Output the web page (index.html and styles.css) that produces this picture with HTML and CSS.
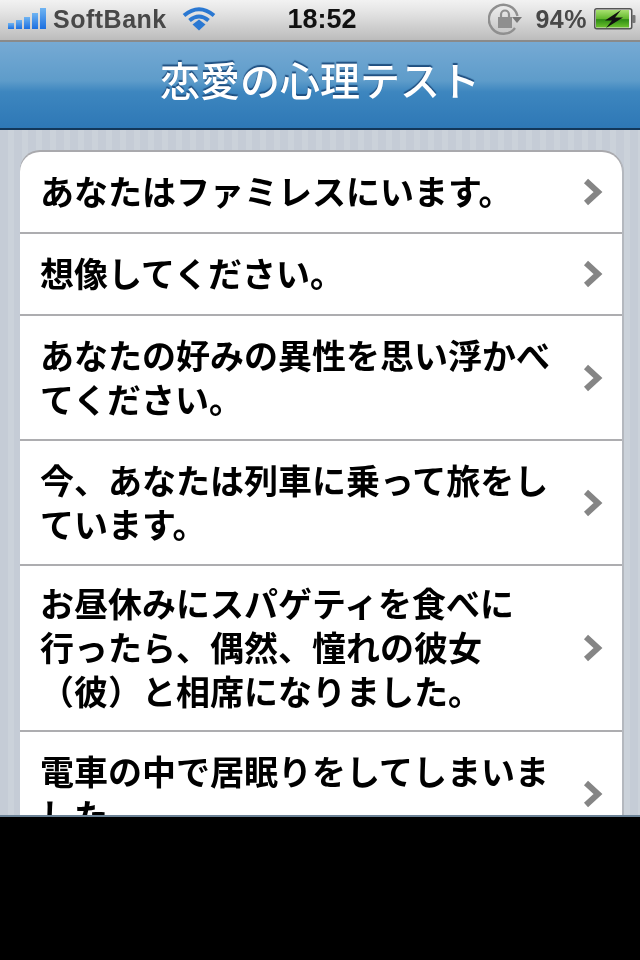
FILE: index.html
```html
<!DOCTYPE html>
<html lang="ja">
<head>
<meta charset="utf-8">
<title>恋愛の心理テスト</title>
<link rel="stylesheet" href="styles.css">
</head>
<body>
<main class="screen">
  <header class="status">
    <div class="status-left">
      <svg class="signal" width="40" height="22" viewBox="0 0 40 22">
        <defs><linearGradient id="sig" x1="0" y1="0" x2="0" y2="1"><stop offset="0" stop-color="#6fb4f2"/><stop offset="1" stop-color="#1c6fe0"/></linearGradient></defs>
        <rect x="0" y="15" width="6" height="6" fill="url(#sig)"/>
        <rect x="8" y="12" width="6" height="9" fill="url(#sig)"/>
        <rect x="16" y="9" width="6" height="12" fill="url(#sig)"/>
        <rect x="24" y="5" width="6" height="16" fill="url(#sig)"/>
        <rect x="32" y="0" width="6" height="21" fill="url(#sig)"/>
      </svg>
      <span class="carrier">SoftBank</span>
      <svg class="wifi" width="34" height="26" viewBox="0 0 34 26">
        <path d="M2 9.500Q17 -3 32 9.500" fill="none" stroke="#2a78d2" stroke-width="4"/>
        <path d="M7.500 14.500Q17 6.500 26.500 14.500" fill="none" stroke="#2a78d2" stroke-width="4"/>
        <path d="M10.500 18.500L17 13.500L23.500 18.500L17 24.500Z" fill="#2a78d2"/>
      </svg>
    </div>
    <time class="clock">18:52</time>
    <div class="status-right">
      <svg class="lock" width="34" height="33" viewBox="0 0 34 33">
        <path d="M27 25A14.500 14.500 0 1 1 29.500 13" fill="none" stroke="#8f8f8f" stroke-width="2.400"/>
        <path d="M24 14H34L29 20Z" fill="#777"/>
        <rect x="10" y="14" width="14" height="11" fill="#8f8f8f"/>
        <path d="M13 14V11.500A4 4 0 0 1 21 11.500V14" fill="none" stroke="#8f8f8f" stroke-width="2.200"/>
      </svg>
      <span class="percent">94%</span>
      <svg class="battery" width="42" height="22" viewBox="0 0 42 22">
        <defs><linearGradient id="bat" x1="0" y1="0" x2="0" y2="1"><stop offset="0" stop-color="#a8e070"/><stop offset="0.5" stop-color="#62b82c"/><stop offset="0.55" stop-color="#2f8c14"/><stop offset="1" stop-color="#6cc22e"/></linearGradient></defs>
        <rect x="0.750" y="0.750" width="37" height="20" rx="2" fill="#e8e8e8" stroke="#555" stroke-width="1.500"/>
        <rect x="2" y="2" width="33" height="17.500" fill="url(#bat)"/>
        <rect x="38" y="7" width="3.500" height="8" rx="1" fill="#777"/>
        <path d="M27 2L11 12.500H18L12 20L29 9.500H21Z" fill="#111"/>
      </svg>
    </div>
  </header>
  <h1 class="navbar">恋愛の心理テスト</h1>
  <section class="content">
    <ul class="list">
      <li class="row one"><span class="label">あなたはファミレスにいます。</span><svg class="chevron" width="20" height="28" viewBox="0 0 20 28"><path d="M3 3L15 14L3 25" fill="none" stroke="#858585" stroke-width="6"/></svg></li>
      <li class="row one"><span class="label">想像してください。</span><svg class="chevron" width="20" height="28" viewBox="0 0 20 28"><path d="M3 3L15 14L3 25" fill="none" stroke="#858585" stroke-width="6"/></svg></li>
      <li class="row two"><span class="label">あなたの好みの異性を思い浮かべ<br>てください。</span><svg class="chevron" width="20" height="28" viewBox="0 0 20 28"><path d="M3 3L15 14L3 25" fill="none" stroke="#858585" stroke-width="6"/></svg></li>
      <li class="row two"><span class="label">今、あなたは列車に乗って旅をし<br>ています。</span><svg class="chevron" width="20" height="28" viewBox="0 0 20 28"><path d="M3 3L15 14L3 25" fill="none" stroke="#858585" stroke-width="6"/></svg></li>
      <li class="row three"><span class="label">お昼休みにスパゲティを食べに<br>行ったら、偶然、憧れの彼女<br>（彼）と相席になりました。</span><svg class="chevron" width="20" height="28" viewBox="0 0 20 28"><path d="M3 3L15 14L3 25" fill="none" stroke="#858585" stroke-width="6"/></svg></li>
      <li class="row two"><span class="label">電車の中で居眠りをしてしまいま<br>した。</span><svg class="chevron" width="20" height="28" viewBox="0 0 20 28"><path d="M3 3L15 14L3 25" fill="none" stroke="#858585" stroke-width="6"/></svg></li>
    </ul>
  </section>
</main>
</body>
</html>
```
FILE: styles.css
```css
* { box-sizing: border-box; }
html, body { margin: 0; padding: 0; }
body {
  width: 640px;
  height: 960px;
  background: #000;
  overflow: hidden;
  font-family: "Liberation Sans", "Noto Sans CJK JP", sans-serif;
}
.screen {
  height: 817px;
  overflow: hidden;
  display: flex;
  flex-direction: column;
  border-bottom: 2px solid #6b8296;
  filter: blur(0.5px);
}
.status {
  flex: none;
  height: 42px;
  display: grid;
  grid-template-columns: 1fr auto 1fr;
  align-items: center;
  padding: 0 4px 2px 8px;
  background: linear-gradient(#f2f2f2, #e4e4e4 30%, #bcbcbc);
  border-bottom: 2px solid #8a8a8a;
}
.status-left, .status-right { display: flex; align-items: center; }
.status-right { justify-content: flex-end; }
.signal { margin-right: 5px; }
.carrier { font-size: 25px; font-weight: 700; color: #484848; letter-spacing: 0.5px; }
.wifi { margin-left: 15px; }
.clock { font-size: 27px; font-weight: 700; color: #111; }
.lock { margin-right: 13px; }
.percent { font-size: 25px; font-weight: 700; color: #484848; margin-right: 7px; letter-spacing: 0.5px; }
.navbar {
  flex: none;
  height: 88px;
  margin: 0;
  display: flex;
  align-items: center;
  justify-content: center;
  padding-bottom: 12px;
  font-family: "Noto Sans CJK JP", sans-serif;
  font-size: 40px;
  font-weight: 500;
  line-height: 1;
  color: #fff;
  text-shadow: 0 -2px 1px #1f4f80;
  background: linear-gradient(#76aad4, #5e9cca 45%, #3d86bf 58%, #2e78b6);
  border-bottom: 2px solid #12375a;
}
.content {
  flex: 1;
  padding: 22px 18px 0 20px;
  background: repeating-linear-gradient(90deg, #c5ccd6 0, #c5ccd6 8px, #cbd2da 8px, #cbd2da 14px);
}
.list {
  list-style: none;
  margin: 0;
  padding: 0;
  background: #fff;
  border-radius: 20px 20px 0 0;
  box-shadow: 0 -2px 0 #a9a9ad, 2px 0 0 #b4b8be;
}
.row {
  display: flex;
  align-items: center;
  justify-content: space-between;
  padding-left: 20px;
  padding-right: 19px;
  border-bottom: 2px solid #adadb0;
}
.row.one { padding-top: 18px; padding-bottom: 18px; }
.row.two { padding-top: 17.500px; padding-bottom: 17.500px; }
.row.three { padding-top: 16px; padding-bottom: 16px; }
.label {
  margin-top: -1px;
  margin-bottom: 1px;
  font-family: "Noto Sans CJK JP", sans-serif;
  font-size: 34px;
  font-weight: 700;
  line-height: 44px;
  color: #000;
  white-space: nowrap;
}
.chevron { flex: none; }
```
